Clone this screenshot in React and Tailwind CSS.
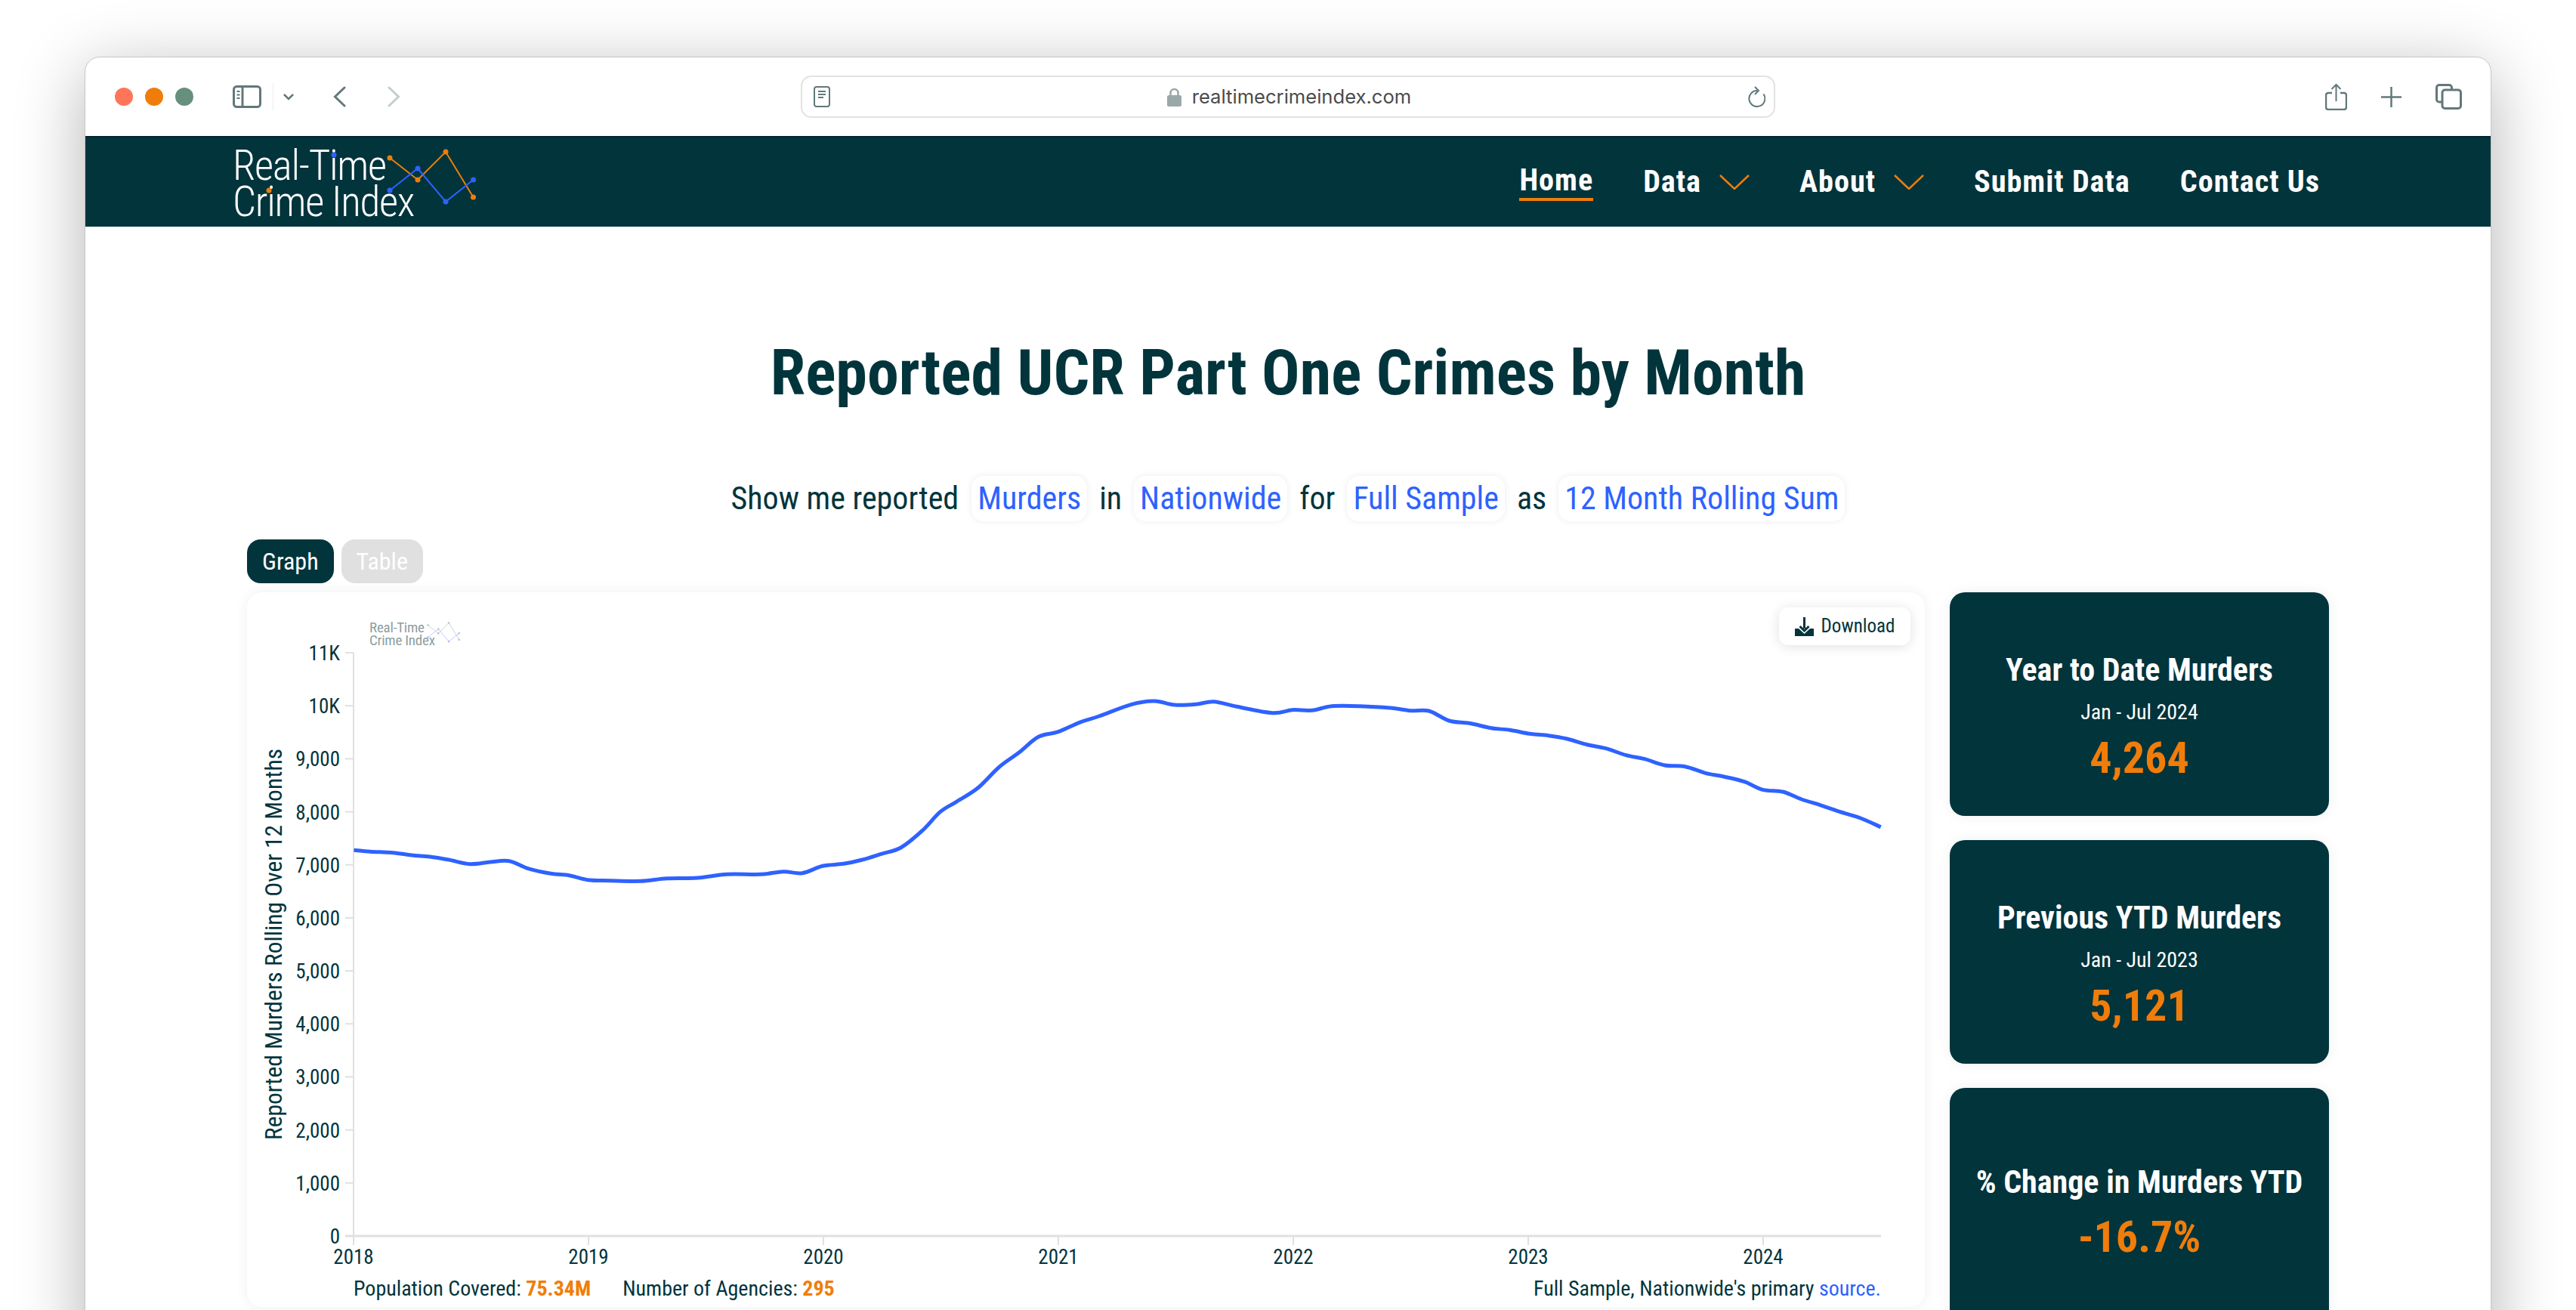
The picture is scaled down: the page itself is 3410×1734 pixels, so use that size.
// Real-Time Crime Index page inside a Safari window
const points = [
  [468.5, 1127.3], [490, 1129.3], [520, 1130.7], [545, 1134], [569, 1136], [594, 1140], [622, 1145.7],
  [649, 1143], [674, 1141.7], [699, 1151.7], [729, 1158.3], [753.5, 1160.7], [778, 1166.7], [808, 1167.7],
  [848, 1168.3], [883, 1164.7], [923, 1164], [962.5, 1159.3], [1007, 1159.3], [1037, 1155.7], [1062, 1157.7],
  [1089, 1148.3], [1117, 1145.3], [1141.6, 1140], [1166.5, 1132.3], [1192.5, 1124], [1220.7, 1101.7],
  [1244.6, 1076.7], [1266, 1063.3], [1294.4, 1045], [1322.6, 1017.3], [1348.6, 998.3], [1374.7, 977.3],
  [1400.7, 970.7], [1428.9, 958.3], [1454.9, 950], [1498, 934.3], [1528.6, 930], [1554.6, 935], [1582.8, 934.3],
  [1606.7, 930.7], [1637, 937.3], [1684.7, 945.7], [1710.7, 941.7], [1736.8, 942.3], [1762.8, 936.7],
  [1800, 936.7], [1840, 939], [1867, 942.7], [1891.5, 943], [1918.3, 956], [1945, 959.3], [1974, 965.7],
  [1998.7, 968.3], [2025.4, 973.3], [2050, 975.7], [2074.6, 980], [2101.3, 987.7], [2125.9, 992.7],
  [2152.7, 1001.7], [2177, 1006.7], [2204, 1015], [2230.8, 1016.7], [2257.6, 1025.3], [2282, 1030],
  [2309, 1036.7], [2333.5, 1047.3], [2360, 1050], [2384.8, 1060], [2411.6, 1068.3], [2436, 1076.7],
  [2463, 1085], [2489.7, 1096.7],
]

// catmull-rom through the traced points
function smoothPath(pts) {
  let d = `M${pts[0][0]} ${pts[0][1]}`
  for (let i = 0; i < pts.length - 1; i++) {
    const p0 = pts[i - 1] || pts[i]
    const p1 = pts[i]
    const p2 = pts[i + 1]
    const p3 = pts[i + 2] || p2
    const c1x = p1[0] + (p2[0] - p0[0]) / 6
    const c1y = p1[1] + (p2[1] - p0[1]) / 6
    const c2x = p2[0] - (p3[0] - p1[0]) / 6
    const c2y = p2[1] - (p3[1] - p1[1]) / 6
    d += ` C${c1x.toFixed(1)} ${c1y.toFixed(1)} ${c2x.toFixed(1)} ${c2y.toFixed(1)} ${p2[0]} ${p2[1]}`
  }
  return d
}

const yTicks = ['0', '1,000', '2,000', '3,000', '4,000', '5,000', '6,000', '7,000', '8,000', '9,000', '10K', '11K']
const xTicks = ['2018', '2019', '2020', '2021', '2022', '2023', '2024']

function Logo({ muted }) {
  const orange = muted ? '#b9c4c6' : '#f07d0a'
  const blue = muted ? '#a9bcff' : '#2e62ff'
  return (
    <div className={muted ? 'relative w-[120px] h-[36px]' : 'relative w-[322px] h-[96px]'}>
      <div className={muted ? 'text-[19px] leading-[17px] tracking-[-0.2px] text-[#8b9ea1] pt-[1px]' : 'text-[55px] leading-[48px] tracking-[-1.3px] font-[350] text-white'}>
        <div>Real-Time</div>
        <div>Crime Index</div>
      </div>
      <svg viewBox="0 0 322 76" className="absolute left-0 top-[2px] w-full" fill="none">
        <polyline points="208,12 245,41 282,4 318.5,64" stroke={orange} strokeWidth="2" />
        <polyline points="208,55 245,26 282,70 318.5,41" stroke={blue} strokeWidth="2" />
        {[[208, 12], [245, 41], [282, 4], [318.5, 64]].map(([x, y]) => (
          <circle key={x} cx={x} cy={y} r="3.5" fill={orange} />
        ))}
        {[[208, 55], [245, 26], [282, 70], [318.5, 41]].map(([x, y]) => (
          <circle key={x} cx={x} cy={y} r="3.5" fill={blue} />
        ))}
        {!muted && <circle cx="134" cy="8" r="3.5" fill={blue} />}
        {!muted && <circle cx="48" cy="55" r="3.5" fill={orange} />}
      </svg>
    </div>
  )
}

function Toolbar() {
  return (
    <div className="flex items-center h-[104px] pl-[39px] text-[#62787a]">
      <div className="flex gap-4">
        <span className="w-6 h-6 rounded-full bg-[#ff7559]" />
        <span className="w-6 h-6 rounded-full bg-[#f07d0a]" />
        <span className="w-6 h-6 rounded-full bg-[#678f7e]" />
      </div>
      <svg className="ml-[52px]" width="38" height="30" viewBox="0 0 38 30" fill="none" stroke="currentColor" strokeWidth="3">
        <rect x="1.5" y="1.5" width="35" height="27" rx="4" />
        <path d="M13 1.5v27" />
        <path d="M5.5 8h4M5.5 12.500h4M5.500 17h4" strokeWidth="2" />
      </svg>
      <span className="ml-[15px] w-px h-9 bg-[#eeeeee]" />
      <svg className="ml-[13px]" width="14" height="9" viewBox="0 0 14 9" fill="none" stroke="currentColor" strokeWidth="2.500">
        <path d="M1 1l6 6 6-6" />
      </svg>
      <svg className="ml-[52px]" width="17" height="28" viewBox="0 0 17 28" fill="none" stroke="currentColor" strokeWidth="3" strokeLinecap="round">
        <path d="M15 2L2.500 14 15 26" />
      </svg>
      <svg className="ml-[55px]" width="17" height="28" viewBox="0 0 17 28" fill="none" stroke="#c3cdce" strokeWidth="3" strokeLinecap="round">
        <path d="M2 2l12.500 12L2 26" />
      </svg>
      <div className="ml-[530px] w-[1290px] h-[56px] rounded-[14px] border-2 border-[#e2e2e2] relative flex items-center justify-center pl-[3px]">
        <svg className="absolute left-[15px]" width="22" height="28" viewBox="0 0 22 28" fill="none" stroke="currentColor" strokeWidth="2">
          <rect x="1" y="1" width="20" height="26" rx="3" />
          <path d="M6 7h10M6 11h10M6 15h7" />
        </svg>
        <svg width="19" height="25" viewBox="0 0 19 25" className="mr-[14px]">
          <path d="M4.500 11V7a5 5 0 0110 0v4" fill="none" stroke="#9aa8a8" strokeWidth="2.500" />
          <rect x="0" y="10" width="19" height="15" rx="2.500" fill="#9aa8a8" />
        </svg>
        <span className="font-['Inter',sans-serif] font-stretch-normal text-[25.6px] text-[#4b4b4b]">realtimecrimeindex.com</span>
        <svg className="absolute right-[11px]" width="24" height="28" viewBox="0 0 24 28" fill="none" stroke="currentColor" strokeWidth="2">
          <path d="M13 6a10.500 10.500 0 108.500 4.500" />
          <path d="M10 1l5 5-5 5" />
        </svg>
      </div>
      <svg className="ml-[728px]" width="29" height="36" viewBox="0 0 29 36" fill="none" stroke="currentColor" strokeWidth="2.500">
        <path d="M9 13H4a3 3 0 00-3 3v16a3 3 0 003 3h21a3 3 0 003-3V16a3 3 0 00-3-3h-5" />
        <path d="M14.500 24V2M8.500 8l6-6 6 6" strokeWidth="2" />
      </svg>
      <svg className="ml-[45px]" width="27" height="27" viewBox="0 0 27 27" fill="none" stroke="currentColor" strokeWidth="2.500">
        <path d="M13.500 0v27M0 13.500h27" />
      </svg>
      <svg className="ml-[45px]" width="35" height="34" viewBox="0 0 35 34" fill="none" stroke="currentColor" strokeWidth="3">
        <path d="M8 24H5a3.500 3.500 0 01-3.500-3.500V5A3.500 3.500 0 015 1.500h13A3.500 3.500 0 0121.500 5v3" />
        <rect x="9" y="8" width="24.500" height="24.500" rx="3.500" />
      </svg>
    </div>
  )
}

function NavItem({ label, active, chevron }) {
  return (
    <div className="flex items-center">
      <span className={active ? 'text-[40.2px] font-bold tracking-[1px] text-white border-b-4 border-[#f07d0a] leading-[46px]' : 'text-[40.2px] font-bold tracking-[1px] text-white leading-[46px]'}>{label}</span>
      {chevron && (
        <svg className="ml-[24px]" width="40" height="20" viewBox="0 0 40 20" fill="none" stroke="#f07d0a" strokeWidth="2.500">
          <path d="M1 1l19 18L39 1" />
        </svg>
      )}
    </div>
  )
}

function Navbar() {
  return (
    <div className="flex items-center justify-between h-[120px] bg-[#02343c] border-t-2 border-[#00262d] pl-[195px] pr-[226px]">
      <div className="pt-[4px]"><Logo /></div>
      <div className="flex items-center gap-[66px]">
        <NavItem label="Home" active />
        <NavItem label="Data" chevron />
        <NavItem label="About" chevron />
        <NavItem label="Submit Data" />
        <NavItem label="Contact Us" />
      </div>
    </div>
  )
}

function Pill({ children }) {
  return <span className="h-[60px] flex items-center px-2 rounded-[16px] text-[#2e62ff] bg-white shadow-[0_0_8px_rgba(2,52,60,0.09)]">{children}</span>
}

function Chart() {
  const yAt = i => 1638 - i * 70.18
  const xAt = i => 468 + i * 311
  return (
    <svg viewBox="327 786 2221 900" className="block w-[2221px] h-[900px]">
      <line x1="468" y1="866" x2="468" y2="1650" stroke="#e0e0e0" strokeWidth="2" />
      {yTicks.map((t, i) => (
        <g key={t}>
          <line x1="457" x2="468" y1={yAt(i)} y2={yAt(i)} stroke="#e0e0e0" strokeWidth="2" />
          <text x="450" y={yAt(i) + 10} textAnchor="end" fontSize="27" fill="#02343c">{t}</text>
        </g>
      ))}
      <line x1="457" x2="2490" y1="1638" y2="1638" stroke="#e0e0e0" strokeWidth="3" />
      {xTicks.map((t, i) => (
        <g key={t}>
          <line x1={xAt(i)} x2={xAt(i)} y1="1638" y2="1650" stroke="#e0e0e0" strokeWidth="2" />
          <text x={xAt(i)} y="1675" textAnchor="middle" fontSize="27" fill="#02343c">{t}</text>
        </g>
      ))}
      <text transform="translate(373 1252) rotate(-90)" textAnchor="middle" fontSize="31.5" fill="#02343c">Reported Murders Rolling Over 12 Months</text>
      <path d={smoothPath(points)} fill="none" stroke="#2e62ff" strokeWidth="5" strokeLinejoin="round" />
    </svg>
  )
}

function StatCard({ title, sub, value, tall }) {
  return (
    <div className={tall ? 'h-[326px] shrink-0 rounded-[20px] bg-[#02343c] flex flex-col items-center justify-center pt-[4px] shadow-[0_0_16px_rgba(2,52,60,0.08)]' : 'h-[296px] shrink-0 rounded-[20px] bg-[#02343c] flex flex-col items-center justify-center pt-[34px] shadow-[0_0_16px_rgba(2,52,60,0.08)]'}>
      <div className="text-[42px] leading-[52px] font-bold text-white">{title}</div>
      {sub && <div className="text-[28px] leading-[36px] mt-[12px] text-white">{sub}</div>}
      <div className={tall ? 'text-[58px] leading-[68px] mt-[12px] font-bold text-[#f07d0a]' : 'text-[58px] leading-[68px] mt-[8px] font-bold text-[#f07d0a]'}>{value}</div>
    </div>
  )
}

export default function App() {
  return (
    <div className="h-[1734px] overflow-hidden bg-white pt-[75px] px-[112px] font-[Roboto,sans-serif] font-stretch-condensed text-[#02343c]">
      <div className="h-[1800px] rounded-t-[20px] border border-[#c6c6c6] bg-white shadow-[0_20px_90px_rgba(0,0,0,0.3)]">
        <Toolbar />
        <Navbar />
        <div className="flex flex-col">
          <h1 className="mt-[144px] text-center text-[84px] leading-[100px] font-bold">Reported UCR Part One Crimes by Month</h1>
          <div className="mt-[84px] flex items-center justify-center gap-[16px] text-[42px]">
            <span className="mr-px">Show me reported</span>
            <Pill>Murders</Pill>
            <span>in</span>
            <Pill>Nationwide</Pill>
            <span>for</span>
            <Pill>Full Sample</Pill>
            <span>as</span>
            <Pill>12 Month Rolling Sum</Pill>
          </div>
          <div className="mx-[214px] mt-[23px]">
            <div className="flex gap-[10px] text-[32px]">
              <span className="h-[58px] px-[20px] rounded-[18px] bg-[#02343c] text-white flex items-center">Graph</span>
              <span className="h-[58px] px-[20px] rounded-[18px] bg-[#e0e0e0] text-white flex items-center">Table</span>
            </div>
            <div className="mt-[12px] flex gap-[33px]">
              <div className="relative w-[2221px] h-[946px] shrink-0 rounded-[20px] bg-white shadow-[0_0_16px_rgba(2,52,60,0.08)]">
                <div className="absolute left-[162px] top-[37px]"><Logo muted /></div>
                <button className="absolute right-[19px] top-[20px] h-[50px] w-[174px] flex items-center justify-center gap-[10px] rounded-[12px] bg-white text-[25px] shadow-[0_2px_16px_rgba(0,0,0,0.12)]">
                  <svg width="25" height="25" viewBox="0 0 25 25" fill="#02343c">
                    <path d="M12.500 0v15M6.500 12l6 6 6-6" fill="none" stroke="#02343c" strokeWidth="3" />
                    <path d="M0 15h5l7.500 7 7.500-7h5v10H0z" />
                  </svg>
                  Download
                </button>
                <Chart />
                <div className="ml-[141px] mr-[58px] flex justify-between text-[28px] leading-[32px] mt-[6px]">
                  <div className="flex gap-[42px]">
                    <span>Population Covered: <b className="text-[#f07d0a]">75.34M</b></span>
                    <span>Number of Agencies: <b className="text-[#f07d0a]">295</b></span>
                  </div>
                  <span>Full Sample, Nationwide's primary <span className="text-[#2e62ff]">source.</span></span>
                </div>
              </div>
              <div className="w-[505px] flex flex-col gap-[32px]">
                <StatCard title="Year to Date Murders" sub="Jan - Jul 2024" value="4,264" />
                <StatCard title="Previous YTD Murders" sub="Jan - Jul 2023" value="5,121" />
                <StatCard title="% Change in Murders YTD" value="-16.7%" tall />
              </div>
            </div>
          </div>
        </div>
      </div>
    </div>
  )
}
